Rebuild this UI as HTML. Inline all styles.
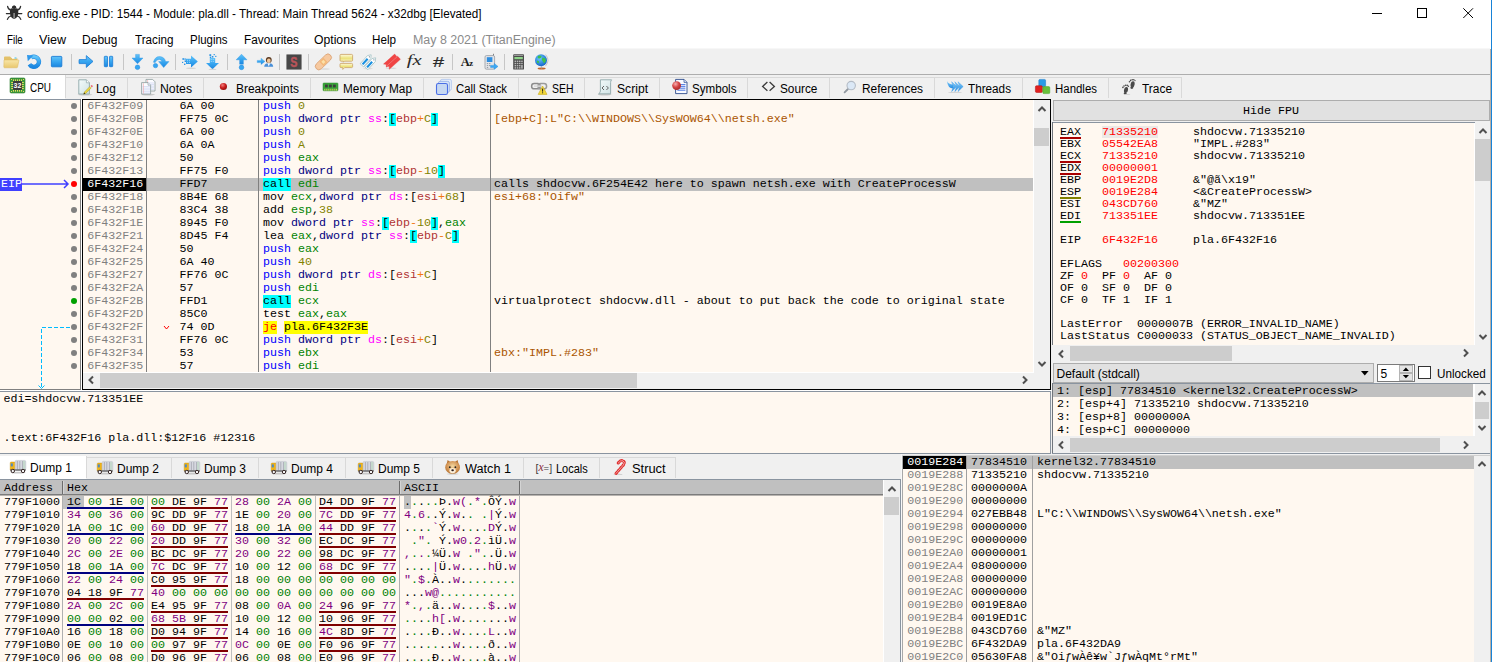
<!DOCTYPE html><html><head><meta charset="utf-8"><title>x32dbg</title><style>
*{margin:0;padding:0;box-sizing:border-box}
html,body{width:1492px;height:662px;overflow:hidden;background:#fff}
body{position:relative;font-family:"Liberation Sans",sans-serif;font-size:12px;color:#000}
.a{position:absolute}
.m{font-family:"Liberation Mono",monospace;font-size:11.665px;white-space:pre;line-height:12px;height:13px}
.r{font-family:"Liberation Mono",monospace;font-size:11.665px;white-space:pre;line-height:12px;height:12px}
.u{position:absolute;white-space:pre;font-size:12px;line-height:14px}
.t{position:absolute;white-space:pre;font-size:12px;line-height:14px;top:81px}
.cream{background:#fff8f0}
.sb{background:#f0f0f0}
.th{background:#cdcdcd}
.gy{color:#808080}
.pp{color:#0000ff}.ms{color:#000080}.sg{color:#ff00ff}.bk{background:#00ffff;color:#000;display:inline-block;height:13px;vertical-align:top}
.br{color:#b03434}.op{color:#f27711}.vl{color:#828200}.rg{color:#008300}
.cl{background:#00ffff;color:#000}.jc{background:#ffff00;color:#ff0000}.ad{background:#ffff00;color:#000}.cl,.jc,.ad{display:inline-block;height:13px;vertical-align:top}
.ac{color:#aa5500}
.rd{color:#ff0000}
.z{color:#008000}.p{color:#800080}
</style></head><body>
<div class="a" style="left:0px;top:0px;width:1492px;height:49px;background:#ffffff;"></div>
<div class="a" style="left:0px;top:49px;width:1491px;height:613px;background:#f0f0f0;"></div>
<div class="a" style="left:0px;top:48px;width:1490px;height:1px;background:#f7f7f7;"></div>
<div class="a" style="left:0px;top:74px;width:1490px;height:1px;background:#adadad;"></div>
<div class="a" style="left:1490px;top:49px;width:1px;height:613px;background:#b8b0a8;"></div>
<div class="a" style="left:1491px;top:0px;width:1px;height:662px;background:#1883d7;"></div>
<svg class="a" style="left:5px;top:4px" width="19" height="17" viewBox="5 4 19 17">
<g stroke="#2e2e2e" stroke-width="1.25" fill="none" stroke-linecap="round">
<path d="M11 10.4 Q8 9.4 7.6 6.4"/><path d="M17.2 10.4 Q20.2 9.4 20.6 6.4"/>
<path d="M10.4 13.6 H6.4"/><path d="M17.8 13.6 H21.8"/>
<path d="M11 16 Q8.2 16.6 7.4 19.4"/><path d="M17.2 16 Q20 16.6 20.8 19.4"/>
</g>
<path d="M11.8 8 Q11.6 5.6 14.1 5.2 Q16.6 5.6 16.4 8 Z" fill="#2e2e2e"/>
<path d="M10.6 8.6 Q14.1 7.2 17.6 8.6 Q19 12 17.8 15.8 Q16.4 18.8 14.1 19 Q11.8 18.8 10.4 15.8 Q9.2 12 10.6 8.6 Z" fill="#2e2e2e"/>
<rect x="13.4" y="13" width="1.4" height="5.4" fill="#9a9a9a"/>
</svg>
<div class="u" style="left:27px;top:7px;transform-origin:0 0;transform:scaleX(0.9758);">config.exe - PID: 1544 - Module: pla.dll - Thread: Main Thread 5624 - x32dbg [Elevated]</div>
<div class="a" style="left:1372px;top:13px;width:10px;height:1px;background:#000;"></div>
<div class="a" style="left:1417px;top:8px;width:10px;height:10px;background:transparent;border:1px solid #000"></div>
<svg class="a" style="left:1463px;top:8px" width="11" height="11" viewBox="0 0 11 11"><path d="M0.3 0.3 L10 10 M10 0.3 L0.3 10" stroke="#000" stroke-width="1" fill="none"/></svg>
<div class="u" style="left:6.5px;top:33px;transform-origin:0 0;transform:scaleX(0.8172);">File</div>
<div class="u" style="left:38.5px;top:33px;transform-origin:0 0;transform:scaleX(1.0468);">View</div>
<div class="u" style="left:82px;top:33px;transform-origin:0 0;transform:scaleX(1.0040);">Debug</div>
<div class="u" style="left:135px;top:33px;transform-origin:0 0;transform:scaleX(0.9731);">Tracing</div>
<div class="u" style="left:190px;top:33px;transform-origin:0 0;transform:scaleX(0.9528);">Plugins</div>
<div class="u" style="left:243.5px;top:33px;transform-origin:0 0;transform:scaleX(0.9818);">Favourites</div>
<div class="u" style="left:314px;top:33px;transform-origin:0 0;transform:scaleX(1.0156);">Options</div>
<div class="u" style="left:372px;top:33px;transform-origin:0 0;transform:scaleX(0.9725);">Help</div>
<div class="u" style="left:412.5px;top:33px;transform-origin:0 0;transform:scaleX(1.0355);color:#8a8a8a">May 8 2021 (TitanEngine)</div>
<div class="a" style="left:71px;top:54px;width:1px;height:16px;background:#c6c6c6;"></div>
<div class="a" style="left:123px;top:54px;width:1px;height:16px;background:#c6c6c6;"></div>
<div class="a" style="left:175px;top:54px;width:1px;height:16px;background:#c6c6c6;"></div>
<div class="a" style="left:227px;top:54px;width:1px;height:16px;background:#c6c6c6;"></div>
<div class="a" style="left:279px;top:54px;width:1px;height:16px;background:#c6c6c6;"></div>
<div class="a" style="left:308px;top:54px;width:1px;height:16px;background:#c6c6c6;"></div>
<div class="a" style="left:452px;top:54px;width:1px;height:16px;background:#c6c6c6;"></div>
<div class="a" style="left:504px;top:54px;width:1px;height:16px;background:#c6c6c6;"></div>
<svg class="a" style="left:0;top:49px" width="560" height="25" viewBox="0 49 560 25">
<defs>
<linearGradient id="gb" x1="0" y1="0" x2="0" y2="1"><stop offset="0" stop-color="#62c4f9"/><stop offset="0.5" stop-color="#38a6f0"/><stop offset="1" stop-color="#1a86e0"/></linearGradient>
<linearGradient id="gb2" x1="0" y1="0" x2="1" y2="1"><stop offset="0" stop-color="#1a8ee6"/><stop offset="0.5" stop-color="#58bdf7"/><stop offset="1" stop-color="#1a8ee6"/></linearGradient>
<linearGradient id="gf" x1="0" y1="0" x2="0" y2="1"><stop offset="0" stop-color="#f8e6a8"/><stop offset="1" stop-color="#e9c76c"/></linearGradient>
<linearGradient id="gy" x1="0" y1="0" x2="0" y2="1"><stop offset="0" stop-color="#fffbe0"/><stop offset="0.5" stop-color="#ece27a"/><stop offset="1" stop-color="#fdf8d0"/></linearGradient>
<radialGradient id="gg" cx="0.4" cy="0.35" r="0.7"><stop offset="0" stop-color="#6cc6ff"/><stop offset="1" stop-color="#0e62c8"/></radialGradient>
</defs>
<!-- 1 folder -->
<path d="M4 57.5 Q4 56.5 5 56.5 H10 L11.5 58 H16.5 Q17.5 58 17.5 59 V60.5 H4 Z" fill="#e3c16a"/>
<rect x="12" y="57.3" width="4.5" height="1.4" fill="#fff"/><rect x="14.5" y="57.3" width="2" height="1.4" fill="#6ac8e8"/>
<path d="M4 60 H18.6 Q19 60 18.9 60.6 L17.6 67 Q17.4 67.8 16.6 67.8 H4.6 Q3.8 67.8 3.8 67 Z" fill="url(#gf)" stroke="#dcb85e" stroke-width="0.5"/>
<!-- 2 restart -->
<path d="M31.2 57.4 A5.1 5.1 0 1 1 29.5 64.4" fill="none" stroke="#1f86de" stroke-width="4.3"/>
<path d="M31.2 57.4 A5.1 5.1 0 1 1 29.5 64.4" fill="none" stroke="url(#gb)" stroke-width="3.3"/>
<path d="M27 54.9 L33.4 55.4 L27.8 61.2 Z" fill="#2f98ea"/>
<!-- 3 stop -->
<rect x="51.4" y="56.4" width="10.4" height="10.4" rx="0.8" fill="url(#gb)" stroke="#1a7cd6" stroke-width="0.9"/>
<!-- 4 run arrow -->
<path d="M79.2 59.6 H86.3 V55.6 L93 61.4 L86.3 67.4 V63.6 H79.2 Q78.8 61.6 79.2 59.6 Z" fill="url(#gb)" stroke="#1a7cd6" stroke-width="0.8"/>
<!-- 5 pause -->
<rect x="104.3" y="56.3" width="3.2" height="10.4" rx="0.6" fill="url(#gb)" stroke="#1a7cd6" stroke-width="0.8"/>
<rect x="109.5" y="56.3" width="3.2" height="10.4" rx="0.6" fill="url(#gb)" stroke="#1a7cd6" stroke-width="0.8"/>
<!-- 6 step into -->
<path d="M135.6 54.4 H139.4 V58 H143 L137.5 63.8 L132 58 H135.6 Z" fill="url(#gb)" stroke="#2a94e6" stroke-width="0.4"/>
<circle cx="137.5" cy="67.3" r="2.3" fill="#35a6f2" stroke="#1c86dc" stroke-width="0.5"/>
<!-- 7 step over -->
<path d="M153.4 62.2 Q155 56.2 160 56.6 Q164.6 57 165.6 61.6 H169 L163.7 67.6 L158.6 61.6 H162 Q161.4 59.6 159.4 59.4 Q156.4 59.4 155.2 62.6 Z" fill="url(#gb)" stroke="#2a94e6" stroke-width="0.4"/>
<circle cx="155.5" cy="65.6" r="2.2" fill="#35a6f2" stroke="#1c86dc" stroke-width="0.5"/>
<!-- 8 trace into (dotted arrow right) -->
<path d="M186 58.8 H191 V55.4 L197.8 61.4 L191 67.4 V64 H186 Z" fill="url(#gb)"/>
<g fill="#2a94e6"><rect x="182.4" y="58.2" width="1.6" height="1.6"/><rect x="184.6" y="60.4" width="1.6" height="1.6"/><rect x="182" y="61.8" width="1.2" height="1.2"/><rect x="184" y="63.6" width="1.4" height="1.4"/><rect x="184.4" y="58.4" width="1.4" height="1.4"/></g>
<g fill="#9ad6fb"><rect x="187" y="59.8" width="1" height="1"/><rect x="189" y="59.8" width="1" height="1"/><rect x="187" y="61.8" width="1" height="1"/><rect x="189" y="61.8" width="1" height="1"/></g>
<ellipse cx="191" cy="68.3" rx="5" ry="0.7" fill="#d4d4d4"/>
<!-- 9 trace over (dotted arrow down) -->
<path d="M209.8 58 H215.2 V63 H219 L212.5 69.2 L206 63 H209.8 Z" fill="url(#gb)"/>
<g fill="#2a94e6"><rect x="209.4" y="54.2" width="1.8" height="1.8"/><rect x="211.8" y="56" width="1.6" height="1.6"/><rect x="213.6" y="54" width="1.2" height="1.2"/><rect x="215.2" y="55.8" width="1.2" height="1.2"/><rect x="209.8" y="56.6" width="1.4" height="1.4"/></g>
<g fill="#9ad6fb"><rect x="210.8" y="59" width="1" height="1"/><rect x="212.8" y="59" width="1" height="1"/><rect x="210.8" y="61" width="1" height="1"/><rect x="212.8" y="61" width="1" height="1"/></g>
<ellipse cx="212.5" cy="69.4" rx="4" ry="0.6" fill="#d4d4d4"/>
<!-- 10 step out -->
<path d="M239.6 64.2 V59.8 H236.2 L241.5 54.2 L247 59.8 H243.4 V64.2 Z" fill="url(#gb)" stroke="#2a94e6" stroke-width="0.4"/>
<circle cx="241.5" cy="67.4" r="2.3" fill="#35a6f2" stroke="#1c86dc" stroke-width="0.5"/>
<!-- 11 run to user code -->
<path d="M257.2 60.4 H261 V58.2 L265 61.4 L261 64.6 V62.6 H257.2 Z" fill="url(#gb)" stroke="#2a94e6" stroke-width="0.3"/>
<path d="M264.2 66.8 Q264.4 63.6 267 63.4 H270.6 Q273 63.6 273.2 66.8 Z" fill="#4a90d8"/>
<path d="M267.6 63.4 L268.8 66.6 L270 63.4 Z" fill="#fff"/>
<circle cx="268.8" cy="59.9" r="2.9" fill="#5a3a22"/>
<ellipse cx="268.8" cy="60.8" rx="1.9" ry="2.3" fill="#f1c79a"/>
<!-- 12 scylla -->
<rect x="286" y="54" width="16" height="16" fill="#fff"/>
<rect x="286.4" y="54.4" width="15.2" height="15.2" fill="#474747"/>
<text x="290.2" y="67.3" font-family="Liberation Sans" font-weight="bold" font-size="15" fill="#b9545a" stroke="#b9545a" stroke-width="0.5" textLength="7.2" lengthAdjust="spacingAndGlyphs">S</text>
<!-- 13 patch band-aid -->
<ellipse cx="325" cy="69" rx="5" ry="0.7" fill="#d8d8d8"/>
<g transform="rotate(-44 323.4 61.9)"><rect x="313.6" y="58.4" width="19.6" height="7" rx="3.5" fill="#f6c9a0" stroke="#d59a6c" stroke-width="0.7"/><rect x="320.6" y="59" width="5.6" height="5.8" fill="#f4b878"/><rect x="322" y="60.4" width="2.8" height="3" fill="#fbe0a8"/></g>
<!-- 14 comments -->
<path d="M340 55.4 Q340 54.4 341 54.4 H351.6 Q352.6 54.4 352.6 55.4 V60.2 Q352.6 61.2 351.6 61.2 H344.4 L343.4 62.2 V61.2 H341 Q340 61.2 340 60.2 Z" fill="url(#gy)" stroke="#c9a060" stroke-width="0.8"/>
<path d="M340 64.4 Q340 63.4 341 63.4 H351.6 Q352.6 63.4 352.6 64.4 V66.6 Q352.6 67.6 351.6 67.6 H344.6 L342.8 69.4 V67.6 H341 Q340 67.6 340 66.6 Z" fill="url(#gy)" stroke="#c9a060" stroke-width="0.8"/>
<!-- 15 labels (blue tags) -->
<ellipse cx="368" cy="68.6" rx="5" ry="0.7" fill="#d8d8d8"/>
<g transform="rotate(-48 366.5 60)"><path d="M359.5 57.8 H370.5 L373.5 60 L370.5 62.2 H359.5 Z" fill="#fff" stroke="#9cbcc0" stroke-width="0.7"/><rect x="360.6" y="58.9" width="7.6" height="2.2" fill="#1a90e0"/><circle cx="370.8" cy="60" r="0.6" fill="#789"/></g>
<g transform="rotate(-48 371 63)"><path d="M364 60.8 H375 L378 63 L375 65.2 H364 Z" fill="#fff" stroke="#9cbcc0" stroke-width="0.7"/><rect x="365.1" y="61.9" width="7.6" height="2.2" fill="#1a90e0"/><circle cx="375.3" cy="63" r="0.6" fill="#789"/></g>
<!-- 16 bookmarks (red) -->
<ellipse cx="391" cy="68.2" rx="5.5" ry="0.7" fill="#d8d8d8"/>
<g transform="rotate(-42 390.6 60.6)"><path d="M383 58.4 H398 V62.6 H383 L384.8 60.5 Z" fill="#f04444" stroke="#e43434" stroke-width="0.3"/></g>
<g transform="rotate(-42 393.6 62.8)"><path d="M386 60.6 H401 V64.8 H386 L387.8 62.7 Z" fill="#f04444" stroke="#e43434" stroke-width="0.3"/><path d="M386.6 60.6 H401" stroke="#f8a0a0" stroke-width="0.5"/></g>
<!-- 17 fx -->
<text x="406.8" y="65" font-family="Liberation Serif" font-style="italic" font-size="15.5" fill="#2a2a2a" textLength="15" lengthAdjust="spacingAndGlyphs">fx</text>
<!-- 18 # -->
<text x="432.8" y="67.2" font-family="Liberation Sans" font-style="italic" font-size="14.4" fill="#2a2a2a" stroke="#2a2a2a" stroke-width="0.2" textLength="11" lengthAdjust="spacingAndGlyphs">#</text>
<!-- 19 A2 -->
<text x="460.8" y="66" font-family="Liberation Serif" font-weight="bold" font-size="12.6" fill="#222">A</text>
<text x="469.2" y="66" font-family="Liberation Serif" font-weight="bold" font-size="8.6" fill="#222">z</text>
<!-- 20 phone + arrow -->
<rect x="493" y="53.8" width="0.9" height="2.4" fill="#777"/>
<rect x="485" y="55.6" width="9.6" height="13.6" rx="1.4" fill="#e4e6ea" stroke="#8a8f98" stroke-width="0.7"/>
<rect x="486.8" y="57.2" width="5.6" height="4.8" fill="#2e8ee0"/>
<g fill="#9aa0a8"><rect x="486.8" y="63" width="1.4" height="1.1"/><rect x="489" y="63" width="1.4" height="1.1"/><rect x="486.8" y="65" width="1.4" height="1.1"/><rect x="489" y="65" width="1.4" height="1.1"/><rect x="486.8" y="67" width="1.4" height="1.1"/></g>
<path d="M490.6 65.4 H494.2 V63.4 L498 66.4 L494.2 69.4 V67.6 H490.6 Z" fill="#3aa8f4" stroke="#1c86dc" stroke-width="0.4"/>
<!-- 21 calculator -->
<rect x="513.2" y="54.2" width="10.8" height="15.4" rx="0.9" fill="#4c4c4c"/>
<rect x="514" y="55" width="9.2" height="1" fill="#9a9a9a"/>
<rect x="514.4" y="57" width="8.4" height="2.2" fill="#8fd48a"/>
<g fill="#b8b8b8"><rect x="514.6" y="60.6" width="1.5" height="1.4"/><rect x="516.8" y="60.6" width="1.5" height="1.4"/><rect x="519" y="60.6" width="1.5" height="1.4"/><rect x="521.2" y="60.6" width="1.5" height="1.4"/>
<rect x="514.6" y="62.8" width="1.5" height="1.4"/><rect x="516.8" y="62.8" width="1.5" height="1.4"/><rect x="519" y="62.8" width="1.5" height="1.4"/><rect x="521.2" y="62.8" width="1.5" height="1.4"/>
<rect x="514.6" y="65" width="1.5" height="1.4"/><rect x="516.8" y="65" width="1.5" height="1.4"/><rect x="519" y="65" width="1.5" height="1.4"/><rect x="521.2" y="65" width="1.5" height="3.6"/>
<rect x="514.6" y="67.2" width="1.5" height="1.4"/><rect x="516.8" y="67.2" width="1.5" height="1.4"/><rect x="519" y="67.2" width="1.5" height="1.4"/></g>
<!-- 22 globe -->
<path d="M545.6 54.6 Q550.6 60.4 545.4 66.2" fill="none" stroke="#c8c8c8" stroke-width="1"/>
<ellipse cx="541.6" cy="68.6" rx="4" ry="1" fill="#c0642a"/>
<rect x="541" y="66.4" width="1.2" height="2" fill="#a8a8a8"/>
<circle cx="541" cy="60.2" r="6" fill="url(#gg)"/>
<path d="M538 56 Q540 55.2 541.6 56 L541 57.8 L539 58.8 L537.6 57.6 Z" fill="#3ec24a"/>
<path d="M542.4 57.4 L545.4 58.4 L546 61 L544 63.4 L543 61.4 L541.8 59.8 Z" fill="#3ec24a"/>
<path d="M537 60.6 L539 61.2 L538.6 63.4 L537 62.6 Z" fill="#3ec24a"/>
</svg>
<div class="a" style="left:0px;top:75px;width:65px;height:24px;background:#ffffff;"></div>
<div class="a" style="left:65px;top:75px;width:1px;height:23px;background:#d9d9d9;"></div>
<div class="a" style="left:65px;top:77px;width:1117px;height:1px;background:#d9d9d9;"></div>
<div class="u" style="left:30px;top:81px;transform-origin:0 0;transform:scaleX(0.8288);">CPU</div>
<div class="a" style="left:127px;top:77px;width:1px;height:21px;background:#d9d9d9;"></div>
<div class="u" style="left:96px;top:82px;transform-origin:0 0;transform:scaleX(0.9890);">Log</div>
<div class="a" style="left:203px;top:77px;width:1px;height:21px;background:#d9d9d9;"></div>
<div class="u" style="left:160px;top:82px;transform-origin:0 0;transform:scaleX(1.0209);">Notes</div>
<div class="a" style="left:310px;top:77px;width:1px;height:21px;background:#d9d9d9;"></div>
<div class="u" style="left:236px;top:82px;transform-origin:0 0;transform:scaleX(0.9942);">Breakpoints</div>
<div class="a" style="left:423px;top:77px;width:1px;height:21px;background:#d9d9d9;"></div>
<div class="u" style="left:343px;top:82px;transform-origin:0 0;transform:scaleX(0.9856);">Memory Map</div>
<div class="a" style="left:518px;top:77px;width:1px;height:21px;background:#d9d9d9;"></div>
<div class="u" style="left:456px;top:82px;transform-origin:0 0;transform:scaleX(0.9441);">Call Stack</div>
<div class="a" style="left:584px;top:77px;width:1px;height:21px;background:#d9d9d9;"></div>
<div class="u" style="left:551.5px;top:82px;transform-origin:0 0;transform:scaleX(0.8713);">SEH</div>
<div class="a" style="left:659px;top:77px;width:1px;height:21px;background:#d9d9d9;"></div>
<div class="u" style="left:617px;top:82px;transform-origin:0 0;transform:scaleX(1.0107);">Script</div>
<div class="a" style="left:747px;top:77px;width:1px;height:21px;background:#d9d9d9;"></div>
<div class="u" style="left:692px;top:82px;transform-origin:0 0;transform:scaleX(0.9671);">Symbols</div>
<div class="a" style="left:829px;top:77px;width:1px;height:21px;background:#d9d9d9;"></div>
<div class="u" style="left:780px;top:82px;transform-origin:0 0;transform:scaleX(0.9837);">Source</div>
<div class="a" style="left:934px;top:77px;width:1px;height:21px;background:#d9d9d9;"></div>
<div class="u" style="left:862px;top:82px;transform-origin:0 0;transform:scaleX(0.9941);">References</div>
<div class="a" style="left:1022px;top:77px;width:1px;height:21px;background:#d9d9d9;"></div>
<div class="u" style="left:968px;top:82px;transform-origin:0 0;transform:scaleX(0.9769);">Threads</div>
<div class="a" style="left:1108px;top:77px;width:1px;height:21px;background:#d9d9d9;"></div>
<div class="u" style="left:1055px;top:82px;transform-origin:0 0;transform:scaleX(0.9540);">Handles</div>
<div class="a" style="left:1181px;top:77px;width:1px;height:21px;background:#d9d9d9;"></div>
<div class="u" style="left:1142px;top:82px;transform-origin:0 0;transform:scaleX(0.9925);">Trace</div>
<svg class="a" style="left:0;top:75px" width="1200" height="24" viewBox="0 75 1200 24">
<defs>
<linearGradient id="pg" x1="0" y1="0" x2="1" y2="1"><stop offset="0" stop-color="#f4fbfb"/><stop offset="1" stop-color="#cfe2e4"/></linearGradient>
<radialGradient id="rb" cx="0.38" cy="0.32" r="0.75"><stop offset="0" stop-color="#f08080"/><stop offset="0.5" stop-color="#cc2020"/><stop offset="1" stop-color="#8a0c0c"/></radialGradient>
<radialGradient id="rb2" cx="0.38" cy="0.32" r="0.75"><stop offset="0" stop-color="#f6b0b0"/><stop offset="0.5" stop-color="#d44444"/><stop offset="1" stop-color="#a02424"/></radialGradient>
<linearGradient id="tb" x1="0" y1="0" x2="0" y2="1"><stop offset="0" stop-color="#8ad0fa"/><stop offset="1" stop-color="#1e88e0"/></linearGradient>
</defs>
<!-- CPU chip -->
<rect x="10" y="78" width="15" height="15" rx="1.2" fill="#3d9a3d" stroke="#2a7a2a" stroke-width="0.6"/>
<g fill="#e8d860"><rect x="13" y="79.4" width="1" height="1.8"/><rect x="15" y="79.4" width="1" height="1.8"/><rect x="17" y="79.4" width="1" height="1.8"/><rect x="19" y="79.4" width="1" height="1.8"/><rect x="21" y="79.4" width="1" height="1.8"/>
<rect x="13" y="89.8" width="1" height="1.8"/><rect x="15" y="89.8" width="1" height="1.8"/><rect x="17" y="89.8" width="1" height="1.8"/><rect x="19" y="89.8" width="1" height="1.8"/><rect x="21" y="89.8" width="1" height="1.8"/>
<rect x="11.2" y="82" width="1.8" height="1"/><rect x="11.2" y="84" width="1.8" height="1"/><rect x="11.2" y="86" width="1.8" height="1"/><rect x="11.2" y="88" width="1.8" height="1"/>
<rect x="22" y="82" width="1.8" height="1"/><rect x="22" y="84" width="1.8" height="1"/><rect x="22" y="86" width="1.8" height="1"/><rect x="22" y="88" width="1.8" height="1"/>
<rect x="11" y="79" width="1" height="1"/><rect x="23" y="79" width="1" height="1"/><rect x="11" y="91" width="1" height="1"/><rect x="23" y="91" width="1" height="1"/></g>
<rect x="13" y="81" width="9" height="9" rx="0.8" fill="#3c3c3c"/>
<text x="13.6" y="88.4" font-family="Liberation Sans" font-weight="bold" font-size="7" fill="#fff" textLength="7.8" lengthAdjust="spacingAndGlyphs">32</text>
<!-- Log: page + pencil -->
<ellipse cx="85" cy="94.8" rx="7.4" ry="0.8" fill="#c8c8c8"/>
<path d="M78.8 79.8 H86.4 L89.4 82.8 V94 H78.8 Z" fill="url(#pg)" stroke="#8fa8aa" stroke-width="0.9"/>
<path d="M86.4 79.8 V82.8 H89.4" fill="#fff" stroke="#8fa8aa" stroke-width="0.7"/>
<path d="M83.6 94.2 L84.4 92 L90 86.4 L91.4 87.8 L85.8 93.4 Z" fill="#ecd83c" stroke="#9a8418" stroke-width="0.4"/>
<path d="M90 86.4 L90.6 85.8 L92 87.2 L91.4 87.8 Z" fill="#e8e8e8"/>
<path d="M90.6 85.8 Q91.6 84.8 92.4 85.6 Q93.2 86.4 92 87.2 Z" fill="#e84050"/>
<path d="M83.6 94.2 L84.2 92.6 L85.2 93.6 Z" fill="#222"/>
<!-- Notes: two pages -->
<ellipse cx="148" cy="94.6" rx="7" ry="0.8" fill="#c8c8c8"/>
<path d="M146 79.4 H152.6 L155 81.8 V91 H146 Z" fill="#fbfcff" stroke="#8a9a9a" stroke-width="0.8"/>
<g stroke="#b8c4ec" stroke-width="0.5"><path d="M147 83 H154 M147 84.6 H154 M147 86.2 H154 M147 87.8 H154 M147 89.4 H154"/></g>
<path d="M147.6 80 V90.6" stroke="#f0a0a0" stroke-width="0.6"/>
<path d="M141.6 82.6 H148 L150.6 85.2 V94 H141.6 Z" fill="#fbfcff" stroke="#8a9a9a" stroke-width="0.8"/>
<path d="M148 82.6 V85.2 H150.6" fill="#eef" stroke="#8a9a9a" stroke-width="0.6"/>
<g stroke="#b8c4ec" stroke-width="0.5"><path d="M142.4 86.6 H150 M142.4 88.2 H150 M142.4 89.8 H150 M142.4 91.4 H150 M142.4 93 H150"/></g>
<path d="M143.4 83.2 V93.6" stroke="#f0a0a0" stroke-width="0.6"/>
<!-- Breakpoints dot -->
<circle cx="223.4" cy="86.5" r="3.6" fill="url(#rb)"/>
<!-- Memory map -->
<rect x="323" y="83" width="15" height="7.8" rx="0.8" fill="#3aa43a" stroke="#2a8a2a" stroke-width="0.5"/>
<g fill="#3c3c3c"><rect x="325" y="84.6" width="2.8" height="2.8"/><rect x="329" y="84.6" width="2.8" height="2.8"/><rect x="333" y="84.6" width="2.8" height="2.8"/></g>
<g fill="#e8d860"><rect x="324.4" y="88.8" width="0.9" height="1.8"/><rect x="326.4" y="88.8" width="0.9" height="1.8"/><rect x="328.4" y="88.8" width="0.9" height="1.8"/><rect x="330.4" y="88.8" width="0.9" height="1.8"/><rect x="332.4" y="88.8" width="0.9" height="1.8"/><rect x="334.4" y="88.8" width="0.9" height="1.8"/><rect x="336.2" y="88.8" width="0.9" height="1.8"/></g>
<!-- Call Stack -->
<rect x="440.4" y="79.4" width="11" height="11" rx="1.6" fill="#e4eefa" stroke="#b4c8ee" stroke-width="0.9"/>
<rect x="438.4" y="81.4" width="11" height="11" rx="1.6" fill="#d8e6f8" stroke="#9ab4ea" stroke-width="0.9"/>
<rect x="436.5" y="83.5" width="11" height="11" rx="1.8" fill="#c6d8f2" stroke="#4a6ee6" stroke-width="1.1"/>
<!-- SEH: chain + warning -->
<rect x="531.6" y="83.6" width="8.6" height="5.2" rx="2.6" fill="none" stroke="#8c8c8c" stroke-width="1.5"/>
<rect x="538" y="83.6" width="8.6" height="5.2" rx="2.6" fill="none" stroke="#9a9a9a" stroke-width="1.5"/>
<rect x="534" y="85.4" width="8" height="1.4" fill="#d8d8d8"/>
<path d="M542.6 86 L547 94.4 H538.2 Z" fill="#f2d838" stroke="#c8a818" stroke-width="0.6" stroke-linejoin="round"/>
<rect x="542.1" y="88.6" width="1" height="3" fill="#222"/><rect x="542.1" y="92.3" width="1" height="1" fill="#222"/>
<!-- Script: scroll -->
<ellipse cx="604.6" cy="94.6" rx="7" ry="0.8" fill="#c8c8c8"/>
<path d="M600.4 79.8 H611.6 Q610.6 81 610.6 82.4 V93.8 H598.6 Q600.4 92.8 600.4 91 Z" fill="url(#pg)" stroke="#8fa8aa" stroke-width="0.9"/>
<path d="M604 86 L602 88 L604 90 M606.4 86 L608.4 88 L606.4 90" fill="none" stroke="#555" stroke-width="0.9"/>
<!-- Symbols: doc + red ball -->
<path d="M675.6 79.4 H684 L687 82.4 V93.6 H675.6 Z" fill="#f8faff" stroke="#2c4c8c" stroke-width="0.9"/>
<path d="M684 79.4 V82.4 H687" fill="#dde6fa" stroke="#2c4c8c" stroke-width="0.7"/>
<g stroke="#3a6ae0" stroke-width="0.9"><path d="M680 84.6 H685.4 M680 86.4 H685.4 M680 88.2 H685.4 M677.4 90.2 H685.4"/></g>
<circle cx="676.6" cy="85.6" r="4.4" fill="url(#rb2)"/>
<!-- Source <> -->
<path d="M767.4 82 L762.6 86.4 L767.4 90.8 M769.6 82 L774.4 86.4 L769.6 90.8" fill="none" stroke="#3c3c3c" stroke-width="1.3"/>
<!-- References: magnifier -->
<path d="M848 89 L844.6 92.4" stroke="#9098a0" stroke-width="1.8" stroke-linecap="round"/>
<circle cx="851.2" cy="85.6" r="4.2" fill="#dbe8f6" stroke="#b4bcc6" stroke-width="1.1"/>
<!-- Threads -->
<ellipse cx="955" cy="92.4" rx="7" ry="0.7" fill="#d4d4d4"/>
<path d="M947 81 Q948.6 84.6 953.4 84.4 L953.4 88.6 Q947.6 88.4 947 81 Z" fill="url(#tb)"/>
<path d="M951.6 81.8 L956.8 86.6 L951.6 91.6 L953.4 86.6 Z" fill="url(#tb)" stroke="#3a9ae8" stroke-width="0.4"/>
<path d="M954.8 81.8 L960 86.6 L954.8 91.6 L956.6 86.6 Z" fill="url(#tb)" stroke="#3a9ae8" stroke-width="0.4"/>
<path d="M958 81.8 L963.2 86.6 L958 91.6 L959.8 86.6 Z" fill="url(#tb)" stroke="#3a9ae8" stroke-width="0.4"/>
<!-- Handles cubes -->
<rect x="1038.8" y="79.4" width="6.8" height="7.4" rx="1.2" fill="#2a9be6" stroke="#1878c8" stroke-width="0.5"/>
<rect x="1035.4" y="85.7" width="7" height="6.8" rx="1.2" fill="#e02020" stroke="#b01010" stroke-width="0.5"/>
<rect x="1042.8" y="86.6" width="7" height="7" rx="1.2" fill="#68c03a" stroke="#48a020" stroke-width="0.5"/>
<!-- Trace footprints -->
<g fill="#4a4a4a">
<ellipse cx="1126" cy="90" rx="2" ry="3.1" transform="rotate(10 1126 90)"/>
<ellipse cx="1125.2" cy="93.4" rx="1.5" ry="1.1"/>
<circle cx="1122.9" cy="87.4" r="0.8"/><circle cx="1124" cy="86" r="0.8"/><circle cx="1125.6" cy="85.3" r="0.8"/><circle cx="1127.2" cy="85.4" r="0.8"/><circle cx="1128.4" cy="86.2" r="0.7"/>
<ellipse cx="1132.6" cy="84.4" rx="2" ry="3.1" transform="rotate(10 1132.6 84.4)"/>
<ellipse cx="1131.8" cy="87.8" rx="1.5" ry="1.1"/>
<circle cx="1129.5" cy="81.8" r="0.8"/><circle cx="1130.6" cy="80.4" r="0.8"/><circle cx="1132.2" cy="79.7" r="0.8"/><circle cx="1133.8" cy="79.8" r="0.8"/><circle cx="1135" cy="80.6" r="0.7"/>
</g>
<ellipse cx="1127" cy="94.5" rx="3.4" ry="0.5" fill="#d0d0d0"/>
</svg>
<div class="a" style="left:0px;top:99px;width:81px;height:1px;background:#8a94a0;"></div>
<div class="a" style="left:0px;top:100px;width:80px;height:289px;background:#fff8f0;"></div>
<div class="a" style="left:80px;top:99px;width:1px;height:291px;background:#808080;"></div>
<div class="a" style="left:0px;top:389px;width:81px;height:1px;background:#808080;"></div>
<div class="a" style="left:81px;top:99px;width:1px;height:291px;background:#ffffff;"></div>
<div class="a" style="left:82px;top:99px;width:969px;height:291px;background:#000000;"></div>
<div class="a" style="left:83px;top:100px;width:950px;height:272px;background:#fff8f0;"></div>
<div class="a" style="left:1033px;top:100px;width:1px;height:273px;background:#ffffff;"></div>
<div class="a" style="left:83px;top:372px;width:951px;height:1px;background:#ffffff;"></div>
<div class="a" style="left:147px;top:178px;width:886px;height:13px;background:#c0c0c0;"></div>
<div class="a" style="left:83px;top:178px;width:63px;height:13px;background:#000000;"></div>
<div class="a" style="left:146px;top:100px;width:1px;height:272px;background:#808080;"></div>
<div class="a" style="left:258px;top:100px;width:1px;height:272px;background:#808080;"></div>
<div class="a" style="left:490px;top:100px;width:1px;height:272px;background:#808080;"></div>
<div class="a" style="left:1034px;top:100px;width:16px;height:273px;background:#f0f0f0;"></div>
<div class="a" style="left:1034px;top:128px;width:15px;height:18px;background:#cdcdcd;"></div>
<div class="a" style="left:83px;top:373px;width:967px;height:16px;background:#f0f0f0;"></div>
<div class="a" style="left:100px;top:373px;width:537px;height:15px;background:#cdcdcd;"></div>
<svg class="a" style="left:1035.5px;top:102.5px" width="12" height="12" viewBox="-6 -6 12 12"><path d="M-3.5 2 L0 -1.5 L3.5 2" stroke="#505050" stroke-width="2" fill="none"/></svg>
<svg class="a" style="left:1035.5px;top:357.5px" width="12" height="12" viewBox="-6 -6 12 12"><path d="M-3.5 -2 L0 1.5 L3.5 -2" stroke="#505050" stroke-width="2" fill="none"/></svg>
<svg class="a" style="left:85px;top:374.0px" width="12" height="12" viewBox="-6 -6 12 12"><path d="M2 -3.5 L-1.5 0 L2 3.5" stroke="#505050" stroke-width="2" fill="none"/></svg>
<svg class="a" style="left:1019px;top:374.0px" width="12" height="12" viewBox="-6 -6 12 12"><path d="M-2 -3.5 L1.5 0 L-2 3.5" stroke="#505050" stroke-width="2" fill="none"/></svg>
<div class="a" style="left:70.8px;top:102.9px;width:6.4px;height:6.4px;border-radius:50%;background:#808080"></div>
<div class="a m" style="left:87.3px;top:100px;color:#808080">6F432F09</div>
<div class="a m" style="left:179.5px;top:100px;">6A 00</div>
<div class="a m" style="left:263px;top:100px;"><span class="pp">push</span> <span class="vl">0</span></div>
<div class="a" style="left:70.8px;top:115.9px;width:6.4px;height:6.4px;border-radius:50%;background:#808080"></div>
<div class="a m" style="left:87.3px;top:113px;color:#808080">6F432F0B</div>
<div class="a m" style="left:179.5px;top:113px;">FF75 0C</div>
<div class="a m" style="left:263px;top:113px;"><span class="pp">push</span> <span class="ms">dword ptr </span><span class="sg">ss</span>:<span class="bk">[</span><span class="br">ebp</span><span class="op">+</span><span class="vl">C</span><span class="bk">]</span></div>
<div class="a m" style="left:494px;top:113px;"><span class="ac">[ebp+C]:L"C:\\WINDOWS\\SysWOW64\\netsh.exe"</span></div>
<div class="a" style="left:70.8px;top:128.9px;width:6.4px;height:6.4px;border-radius:50%;background:#808080"></div>
<div class="a m" style="left:87.3px;top:126px;color:#808080">6F432F0E</div>
<div class="a m" style="left:179.5px;top:126px;">6A 00</div>
<div class="a m" style="left:263px;top:126px;"><span class="pp">push</span> <span class="vl">0</span></div>
<div class="a" style="left:70.8px;top:141.9px;width:6.4px;height:6.4px;border-radius:50%;background:#808080"></div>
<div class="a m" style="left:87.3px;top:139px;color:#808080">6F432F10</div>
<div class="a m" style="left:179.5px;top:139px;">6A 0A</div>
<div class="a m" style="left:263px;top:139px;"><span class="pp">push</span> <span class="vl">A</span></div>
<div class="a" style="left:70.8px;top:154.9px;width:6.4px;height:6.4px;border-radius:50%;background:#808080"></div>
<div class="a m" style="left:87.3px;top:152px;color:#808080">6F432F12</div>
<div class="a m" style="left:179.5px;top:152px;">50</div>
<div class="a m" style="left:263px;top:152px;"><span class="pp">push</span> <span class="rg">eax</span></div>
<div class="a" style="left:70.8px;top:167.9px;width:6.4px;height:6.4px;border-radius:50%;background:#808080"></div>
<div class="a m" style="left:87.3px;top:165px;color:#808080">6F432F13</div>
<div class="a m" style="left:179.5px;top:165px;">FF75 F0</div>
<div class="a m" style="left:263px;top:165px;"><span class="pp">push</span> <span class="ms">dword ptr </span><span class="sg">ss</span>:<span class="bk">[</span><span class="br">ebp</span><span class="op">-</span><span class="vl">10</span><span class="bk">]</span></div>
<div class="a" style="left:70.8px;top:180.9px;width:6.4px;height:6.4px;border-radius:50%;background:#ff0000"></div>
<div class="a m" style="left:87.3px;top:178px;color:#fff">6F432F16</div>
<div class="a m" style="left:179.5px;top:178px;">FFD7</div>
<div class="a m" style="left:263px;top:178px;"><span class="cl">call</span> <span class="rg">edi</span></div>
<div class="a m" style="left:494px;top:178px;">calls shdocvw.6F254E42 here to spawn netsh.exe with CreateProcessW</div>
<div class="a" style="left:70.8px;top:193.9px;width:6.4px;height:6.4px;border-radius:50%;background:#808080"></div>
<div class="a m" style="left:87.3px;top:191px;color:#808080">6F432F18</div>
<div class="a m" style="left:179.5px;top:191px;">8B4E 68</div>
<div class="a m" style="left:263px;top:191px;">mov <span class="rg">ecx</span>,<span class="ms">dword ptr </span><span class="sg">ds</span>:[<span class="br">esi</span><span class="op">+</span><span class="vl">68</span>]</div>
<div class="a m" style="left:494px;top:191px;"><span class="ac">esi+68:"Oifw"</span></div>
<div class="a" style="left:70.8px;top:206.9px;width:6.4px;height:6.4px;border-radius:50%;background:#808080"></div>
<div class="a m" style="left:87.3px;top:204px;color:#808080">6F432F1B</div>
<div class="a m" style="left:179.5px;top:204px;">83C4 38</div>
<div class="a m" style="left:263px;top:204px;">add <span class="rg">esp</span>,<span class="vl">38</span></div>
<div class="a" style="left:70.8px;top:219.9px;width:6.4px;height:6.4px;border-radius:50%;background:#808080"></div>
<div class="a m" style="left:87.3px;top:217px;color:#808080">6F432F1E</div>
<div class="a m" style="left:179.5px;top:217px;">8945 F0</div>
<div class="a m" style="left:263px;top:217px;">mov <span class="ms">dword ptr </span><span class="sg">ss</span>:<span class="bk">[</span><span class="br">ebp</span><span class="op">-</span><span class="vl">10</span><span class="bk">]</span>,<span class="rg">eax</span></div>
<div class="a" style="left:70.8px;top:232.9px;width:6.4px;height:6.4px;border-radius:50%;background:#808080"></div>
<div class="a m" style="left:87.3px;top:230px;color:#808080">6F432F21</div>
<div class="a m" style="left:179.5px;top:230px;">8D45 F4</div>
<div class="a m" style="left:263px;top:230px;">lea <span class="rg">eax</span>,<span class="ms">dword ptr </span><span class="sg">ss</span>:<span class="bk">[</span><span class="br">ebp</span><span class="op">-</span><span class="vl">C</span><span class="bk">]</span></div>
<div class="a" style="left:70.8px;top:245.9px;width:6.4px;height:6.4px;border-radius:50%;background:#808080"></div>
<div class="a m" style="left:87.3px;top:243px;color:#808080">6F432F24</div>
<div class="a m" style="left:179.5px;top:243px;">50</div>
<div class="a m" style="left:263px;top:243px;"><span class="pp">push</span> <span class="rg">eax</span></div>
<div class="a" style="left:70.8px;top:258.9px;width:6.4px;height:6.4px;border-radius:50%;background:#808080"></div>
<div class="a m" style="left:87.3px;top:256px;color:#808080">6F432F25</div>
<div class="a m" style="left:179.5px;top:256px;">6A 40</div>
<div class="a m" style="left:263px;top:256px;"><span class="pp">push</span> <span class="vl">40</span></div>
<div class="a" style="left:70.8px;top:271.9px;width:6.4px;height:6.4px;border-radius:50%;background:#808080"></div>
<div class="a m" style="left:87.3px;top:269px;color:#808080">6F432F27</div>
<div class="a m" style="left:179.5px;top:269px;">FF76 0C</div>
<div class="a m" style="left:263px;top:269px;"><span class="pp">push</span> <span class="ms">dword ptr </span><span class="sg">ds</span>:[<span class="br">esi</span><span class="op">+</span><span class="vl">C</span>]</div>
<div class="a" style="left:70.8px;top:284.9px;width:6.4px;height:6.4px;border-radius:50%;background:#808080"></div>
<div class="a m" style="left:87.3px;top:282px;color:#808080">6F432F2A</div>
<div class="a m" style="left:179.5px;top:282px;">57</div>
<div class="a m" style="left:263px;top:282px;"><span class="pp">push</span> <span class="rg">edi</span></div>
<div class="a" style="left:70.8px;top:297.9px;width:6.4px;height:6.4px;border-radius:50%;background:#00a000"></div>
<div class="a m" style="left:87.3px;top:295px;color:#808080">6F432F2B</div>
<div class="a m" style="left:179.5px;top:295px;">FFD1</div>
<div class="a m" style="left:263px;top:295px;"><span class="cl">call</span> <span class="rg">ecx</span></div>
<div class="a m" style="left:494px;top:295px;">virtualprotect shdocvw.dll - about to put back the code to original state</div>
<div class="a" style="left:70.8px;top:310.9px;width:6.4px;height:6.4px;border-radius:50%;background:#808080"></div>
<div class="a m" style="left:87.3px;top:308px;color:#808080">6F432F2D</div>
<div class="a m" style="left:179.5px;top:308px;">85C0</div>
<div class="a m" style="left:263px;top:308px;">test <span class="rg">eax</span>,<span class="rg">eax</span></div>
<div class="a" style="left:70.8px;top:323.9px;width:6.4px;height:6.4px;border-radius:50%;background:#808080"></div>
<div class="a m" style="left:87.3px;top:321px;color:#808080">6F432F2F</div>
<div class="a m" style="left:179.5px;top:321px;">74 0D</div>
<div class="a m" style="left:263px;top:321px;"><span class="jc">je</span> <span class="ad">pla.6F432F3E</span></div>
<div class="a" style="left:70.8px;top:336.9px;width:6.4px;height:6.4px;border-radius:50%;background:#808080"></div>
<div class="a m" style="left:87.3px;top:334px;color:#808080">6F432F31</div>
<div class="a m" style="left:179.5px;top:334px;">FF76 0C</div>
<div class="a m" style="left:263px;top:334px;"><span class="pp">push</span> <span class="ms">dword ptr </span><span class="sg">ds</span>:[<span class="br">esi</span><span class="op">+</span><span class="vl">C</span>]</div>
<div class="a" style="left:70.8px;top:349.9px;width:6.4px;height:6.4px;border-radius:50%;background:#808080"></div>
<div class="a m" style="left:87.3px;top:347px;color:#808080">6F432F34</div>
<div class="a m" style="left:179.5px;top:347px;">53</div>
<div class="a m" style="left:263px;top:347px;"><span class="pp">push</span> <span class="rg">ebx</span></div>
<div class="a m" style="left:494px;top:347px;"><span class="ac">ebx:"IMPL.#283"</span></div>
<div class="a" style="left:70.8px;top:362.9px;width:6.4px;height:6.4px;border-radius:50%;background:#808080"></div>
<div class="a m" style="left:87.3px;top:360px;color:#808080">6F432F35</div>
<div class="a m" style="left:179.5px;top:360px;">57</div>
<div class="a m" style="left:263px;top:360px;"><span class="pp">push</span> <span class="rg">edi</span></div>
<svg class="a" style="left:163px;top:324px" width="8" height="8" viewBox="0 0 8 8"><path d="M1 2 L3.5 5 L6 2" stroke="#ff0000" stroke-width="1" fill="none"/></svg>
<div class="a" style="left:0px;top:178px;width:22px;height:13px;background:#4040ff;"></div>
<div class="a m" style="left:1px;top:178px;color:#fff">EIP</div>
<svg class="a" style="left:22px;top:178px" width="48" height="13" viewBox="0 0 48 13"><path d="M0 6 H46 M42 2 L46 6 L42 10" stroke="#4040ff" stroke-width="1.5" fill="none"/></svg>
<svg class="a" style="left:36px;top:325px" width="40" height="66" viewBox="0 0 40 66"><path d="M34 2.5 H5.5 V63.5" stroke="#00bbff" stroke-width="1" fill="none" stroke-dasharray="4 2"/><path d="M2.5 60.5 L5.5 63.5 L8.5 60.5" stroke="#00bbff" stroke-width="1" fill="none"/></svg>
<div class="a" style="left:1053px;top:100px;width:437px;height:21px;background:#e1e1e1;border:1px solid #adadad"></div>
<div class="a m" style="left:1243px;top:105px;">Hide FPU</div>
<div class="a" style="left:1052px;top:122px;width:423px;height:1px;background:#8a94a0;"></div>
<div class="a" style="left:1052px;top:122px;width:1px;height:223px;background:#70757c;"></div>
<div class="a" style="left:1053px;top:123px;width:421px;height:222px;background:#fff8f0;"></div>
<div class="a" style="left:1474px;top:123px;width:1px;height:238px;background:#ffffff;"></div>
<div class="a" style="left:1475px;top:123px;width:15px;height:222px;background:#f0f0f0;"></div>
<div class="a" style="left:1475px;top:139px;width:15px;height:42px;background:#cdcdcd;"></div>
<svg class="a" style="left:1476.5px;top:124.5px" width="12" height="12" viewBox="-6 -6 12 12"><path d="M-3.5 2 L0 -1.5 L3.5 2" stroke="#505050" stroke-width="2" fill="none"/></svg>
<svg class="a" style="left:1476.5px;top:330.5px" width="12" height="12" viewBox="-6 -6 12 12"><path d="M-3.5 -2 L0 1.5 L3.5 -2" stroke="#505050" stroke-width="2" fill="none"/></svg>
<div class="a" style="left:1053px;top:345px;width:422px;height:17px;background:#f0f0f0;"></div>
<div class="a" style="left:1070px;top:346px;width:162px;height:15px;background:#cdcdcd;"></div>
<svg class="a" style="left:1055px;top:347.5px" width="12" height="12" viewBox="-6 -6 12 12"><path d="M2 -3.5 L-1.5 0 L2 3.5" stroke="#505050" stroke-width="2" fill="none"/></svg>
<svg class="a" style="left:1460px;top:347.0px" width="12" height="12" viewBox="-6 -6 12 12"><path d="M-2 -3.5 L1.5 0 L-2 3.5" stroke="#505050" stroke-width="2" fill="none"/></svg>
<div class="a" style="left:1475px;top:345px;width:15px;height:16px;background:#f0f0f0;"></div>
<div class="a r" style="left:1060px;top:126px;">EAX</div>
<div class="a" style="left:1060px;top:137px;width:21px;height:2px;background:#aa0000;"></div>
<div class="a r" style="left:1102px;top:126px;color:#ff0000"><span style="background:#ece8e6;display:inline-block;height:12px;vertical-align:top">71335210</span></div>
<div class="a r" style="left:1193px;top:126px;">shdocvw.71335210</div>
<div class="a r" style="left:1060px;top:138px;">EBX</div>
<div class="a r" style="left:1102px;top:138px;color:#ff0000">05542EA8</div>
<div class="a r" style="left:1193px;top:138px;">"IMPL.#283"</div>
<div class="a r" style="left:1060px;top:150px;">ECX</div>
<div class="a" style="left:1060px;top:161px;width:21px;height:2px;background:#aa0000;"></div>
<div class="a r" style="left:1102px;top:150px;color:#ff0000">71335210</div>
<div class="a r" style="left:1193px;top:150px;">shdocvw.71335210</div>
<div class="a r" style="left:1060px;top:162px;">EDX</div>
<div class="a" style="left:1060px;top:173px;width:21px;height:2px;background:#aa0000;"></div>
<div class="a r" style="left:1102px;top:162px;color:#ff0000">00000001</div>
<div class="a r" style="left:1060px;top:174px;">EBP</div>
<div class="a r" style="left:1102px;top:174px;color:#ff0000">0019E2D8</div>
<div class="a r" style="left:1193px;top:174px;">&amp;"@ã\x19"</div>
<div class="a r" style="left:1060px;top:186px;">ESP</div>
<div class="a" style="left:1060px;top:197px;width:21px;height:2px;background:#808000;"></div>
<div class="a r" style="left:1102px;top:186px;color:#ff0000">0019E284</div>
<div class="a r" style="left:1193px;top:186px;">&lt;&amp;CreateProcessW&gt;</div>
<div class="a r" style="left:1060px;top:198px;">ESI</div>
<div class="a r" style="left:1102px;top:198px;color:#ff0000">043CD760</div>
<div class="a r" style="left:1193px;top:198px;">&amp;"MZ"</div>
<div class="a r" style="left:1060px;top:210px;">EDI</div>
<div class="a" style="left:1060px;top:221px;width:21px;height:2px;background:#00a000;"></div>
<div class="a r" style="left:1102px;top:210px;color:#ff0000">713351EE</div>
<div class="a r" style="left:1193px;top:210px;">shdocvw.713351EE</div>
<div class="a r" style="left:1060px;top:234px;">EIP</div>
<div class="a r" style="left:1102px;top:234px;color:#ff0000">6F432F16</div>
<div class="a r" style="left:1193px;top:234px;">pla.6F432F16</div>
<div class="a r" style="left:1060px;top:258px;">EFLAGS   <span class="rd">00200300</span></div>
<div class="a r" style="left:1060px;top:270px;">ZF <span class="rd">0</span>  PF <span class="rd">0</span>  AF 0</div>
<div class="a r" style="left:1060px;top:282px;">OF 0  SF 0  DF 0</div>
<div class="a r" style="left:1060px;top:294px;">CF 0  TF 1  IF 1</div>
<div class="a r" style="left:1060px;top:318px;">LastError  0000007B (ERROR_INVALID_NAME)</div>
<div class="a r" style="left:1060px;top:330px;">LastStatus C0000033 (STATUS_OBJECT_NAME_INVALID)</div>
<div class="a" style="left:1053px;top:363px;width:321px;height:20px;background:#e1e1e1;border:1px solid #adadad"></div>
<div class="u" style="left:1056.5px;top:367px;">Default (stdcall)</div>
<svg class="a" style="left:1360.5px;top:371px" width="8" height="5" viewBox="0 0 8 5"><path d="M0 0 H7.6 L3.8 4.4 Z" fill="#000"/></svg>
<div class="a" style="left:1377px;top:364px;width:38px;height:18px;background:#ffffff;border:1px solid #7a7a7a"></div>
<div class="u" style="left:1380.5px;top:367px;">5</div>
<div class="a" style="left:1399px;top:365px;width:14px;height:8px;background:#e4e4e4;border:1px solid #b4b4b4"></div>
<div class="a" style="left:1399px;top:373px;width:14px;height:8px;background:#e4e4e4;border:1px solid #b4b4b4"></div>
<svg class="a" style="left:1402px;top:367px" width="8" height="12" viewBox="0 0 8 12"><path d="M0.8 4 H7 L3.9 0.6 Z M0.8 8 H7 L3.9 11.2 Z" fill="#000"/></svg>
<div class="a" style="left:1418px;top:366px;width:13px;height:13px;background:#ffffff;border:1px solid #333"></div>
<div class="u" style="left:1436.5px;top:367px;transform-origin:0 0;transform:scaleX(0.9755);">Unlocked</div>
<div class="a" style="left:1052px;top:383px;width:438px;height:1px;background:#8a94a0;"></div>
<div class="a" style="left:1052px;top:383px;width:1px;height:70px;background:#70757c;"></div>
<div class="a" style="left:1053px;top:384px;width:420px;height:52px;background:#fff8f0;"></div>
<div class="a" style="left:1053px;top:384px;width:420px;height:13px;background:#c0c0c0;"></div>
<div class="a" style="left:1473px;top:384px;width:2px;height:68px;background:#ffffff;"></div>
<div class="a m" style="left:1057px;top:385px;">1: [esp] 77834510 &lt;kernel32.CreateProcessW&gt;</div>
<div class="a m" style="left:1057px;top:398px;">2: [esp+4] 71335210 shdocvw.71335210</div>
<div class="a m" style="left:1057px;top:411px;">3: [esp+8] 0000000A</div>
<div class="a m" style="left:1057px;top:424px;">4: [esp+C] 00000000</div>
<div class="a" style="left:1475px;top:384px;width:15px;height:52px;background:#f0f0f0;"></div>
<div class="a" style="left:1475px;top:402px;width:14px;height:17px;background:#cdcdcd;"></div>
<svg class="a" style="left:1475.8px;top:386.5px" width="12" height="12" viewBox="-6 -6 12 12"><path d="M-3.5 2 L0 -1.5 L3.5 2" stroke="#505050" stroke-width="2" fill="none"/></svg>
<svg class="a" style="left:1475.8px;top:421.5px" width="12" height="12" viewBox="-6 -6 12 12"><path d="M-3.5 -2 L0 1.5 L3.5 -2" stroke="#505050" stroke-width="2" fill="none"/></svg>
<div class="a" style="left:1053px;top:436px;width:422px;height:17px;background:#f0f0f0;"></div>
<div class="a" style="left:1070px;top:438px;width:370px;height:14px;background:#cdcdcd;"></div>
<svg class="a" style="left:1055px;top:438.5px" width="12" height="12" viewBox="-6 -6 12 12"><path d="M2 -3.5 L-1.5 0 L2 3.5" stroke="#505050" stroke-width="2" fill="none"/></svg>
<svg class="a" style="left:1459.5px;top:438.5px" width="12" height="12" viewBox="-6 -6 12 12"><path d="M-2 -3.5 L1.5 0 L-2 3.5" stroke="#505050" stroke-width="2" fill="none"/></svg>
<div class="a" style="left:1052px;top:453px;width:438px;height:1px;background:#8a94a0;"></div>
<div class="a" style="left:1475px;top:436px;width:15px;height:16px;background:#f0f0f0;"></div>
<div class="a" style="left:0px;top:391px;width:1051px;height:1px;background:#8a94a0;"></div>
<div class="a" style="left:0px;top:392px;width:1050px;height:61px;background:#fff8f0;"></div>
<div class="a" style="left:1050px;top:391px;width:1px;height:63px;background:#8a94a0;"></div>
<div class="a" style="left:0px;top:453px;width:1051px;height:1px;background:#8a94a0;"></div>
<div class="a" style="left:0px;top:390px;width:1052px;height:1px;background:#ffffff;"></div>
<div class="a m" style="left:3.4px;top:393px;">edi=shdocvw.713351EE</div>
<div class="a m" style="left:3.4px;top:432px;">.text:6F432F16 pla.dll:$12F16 #12316</div>
<div class="a" style="left:0px;top:456px;width:86px;height:23px;background:#ffffff;"></div>
<div class="a" style="left:86px;top:456px;width:1px;height:22px;background:#d9d9d9;"></div>
<div class="a" style="left:86px;top:457px;width:590px;height:1px;background:#d9d9d9;"></div>
<div class="u" style="left:30px;top:461px;transform-origin:0 0;transform:scaleX(0.9996);">Dump 1</div>
<div class="a" style="left:171px;top:457px;width:1px;height:21px;background:#d9d9d9;"></div>
<div class="u" style="left:117px;top:462px;transform-origin:0 0;transform:scaleX(0.9996);">Dump 2</div>
<div class="a" style="left:258px;top:457px;width:1px;height:21px;background:#d9d9d9;"></div>
<div class="u" style="left:204px;top:462px;transform-origin:0 0;transform:scaleX(0.9996);">Dump 3</div>
<div class="a" style="left:345px;top:457px;width:1px;height:21px;background:#d9d9d9;"></div>
<div class="u" style="left:291px;top:462px;transform-origin:0 0;transform:scaleX(0.9996);">Dump 4</div>
<div class="a" style="left:432px;top:457px;width:1px;height:21px;background:#d9d9d9;"></div>
<div class="u" style="left:378px;top:462px;transform-origin:0 0;transform:scaleX(0.9996);">Dump 5</div>
<div class="a" style="left:523px;top:457px;width:1px;height:21px;background:#d9d9d9;"></div>
<div class="u" style="left:465px;top:462px;transform-origin:0 0;transform:scaleX(1.0558);">Watch 1</div>
<div class="a" style="left:599px;top:457px;width:1px;height:21px;background:#d9d9d9;"></div>
<div class="u" style="left:556.2px;top:462px;transform-origin:0 0;transform:scaleX(0.9168);">Locals</div>
<div class="a" style="left:675px;top:457px;width:1px;height:21px;background:#d9d9d9;"></div>
<div class="u" style="left:632.2px;top:462px;transform-origin:0 0;transform:scaleX(1.0721);">Struct</div>
<svg class="a" style="left:0;top:455px" width="700" height="24" viewBox="0 455 700 24"><defs><radialGradient id="dg" cx="0.5" cy="0.4" r="0.7"><stop offset="0" stop-color="#f4d8a0"/><stop offset="0.6" stop-color="#d09050"/><stop offset="1" stop-color="#a86828"/></radialGradient></defs><g transform="translate(10,0)">
<ellipse cx="8" cy="472.6" rx="7.6" ry="0.8" fill="#c8c8c8"/>
<rect x="5" y="460.4" width="10.8" height="9.8" rx="1.4" fill="#d6d8e0" stroke="#b8bcc4" stroke-width="0.5"/>
<path d="M7.4 461 V469.6 M9.8 461 V469.6 M12.6 461 V469.6" stroke="#a8aab4" stroke-width="0.9"/>
<path d="M13 461 H15.2 V469.6 H13 Z" fill="#c4d8cc"/>
<path d="M0.2 463 Q0.2 462 1.2 462 H4.6 V470 H0.2 Z" fill="#f0b418" stroke="#c89010" stroke-width="0.4"/>
<rect x="0.8" y="463.4" width="2" height="3" fill="#4a88c8"/>
<rect x="0.2" y="469.4" width="15.6" height="1.2" fill="#555"/>
<circle cx="2.8" cy="471" r="1.7" fill="#f4f4f4" stroke="#3a2a2a" stroke-width="1"/>
<circle cx="13" cy="471" r="1.7" fill="#f4f4f4" stroke="#3a2a2a" stroke-width="1"/>
</g><g transform="translate(97,1)">
<ellipse cx="8" cy="472.6" rx="7.6" ry="0.8" fill="#c8c8c8"/>
<rect x="5" y="460.4" width="10.8" height="9.8" rx="1.4" fill="#d6d8e0" stroke="#b8bcc4" stroke-width="0.5"/>
<path d="M7.4 461 V469.6 M9.8 461 V469.6 M12.6 461 V469.6" stroke="#a8aab4" stroke-width="0.9"/>
<path d="M13 461 H15.2 V469.6 H13 Z" fill="#c4d8cc"/>
<path d="M0.2 463 Q0.2 462 1.2 462 H4.6 V470 H0.2 Z" fill="#f0b418" stroke="#c89010" stroke-width="0.4"/>
<rect x="0.8" y="463.4" width="2" height="3" fill="#4a88c8"/>
<rect x="0.2" y="469.4" width="15.6" height="1.2" fill="#555"/>
<circle cx="2.8" cy="471" r="1.7" fill="#f4f4f4" stroke="#3a2a2a" stroke-width="1"/>
<circle cx="13" cy="471" r="1.7" fill="#f4f4f4" stroke="#3a2a2a" stroke-width="1"/>
</g><g transform="translate(184,1)">
<ellipse cx="8" cy="472.6" rx="7.6" ry="0.8" fill="#c8c8c8"/>
<rect x="5" y="460.4" width="10.8" height="9.8" rx="1.4" fill="#d6d8e0" stroke="#b8bcc4" stroke-width="0.5"/>
<path d="M7.4 461 V469.6 M9.8 461 V469.6 M12.6 461 V469.6" stroke="#a8aab4" stroke-width="0.9"/>
<path d="M13 461 H15.2 V469.6 H13 Z" fill="#c4d8cc"/>
<path d="M0.2 463 Q0.2 462 1.2 462 H4.6 V470 H0.2 Z" fill="#f0b418" stroke="#c89010" stroke-width="0.4"/>
<rect x="0.8" y="463.4" width="2" height="3" fill="#4a88c8"/>
<rect x="0.2" y="469.4" width="15.6" height="1.2" fill="#555"/>
<circle cx="2.8" cy="471" r="1.7" fill="#f4f4f4" stroke="#3a2a2a" stroke-width="1"/>
<circle cx="13" cy="471" r="1.7" fill="#f4f4f4" stroke="#3a2a2a" stroke-width="1"/>
</g><g transform="translate(271,1)">
<ellipse cx="8" cy="472.6" rx="7.6" ry="0.8" fill="#c8c8c8"/>
<rect x="5" y="460.4" width="10.8" height="9.8" rx="1.4" fill="#d6d8e0" stroke="#b8bcc4" stroke-width="0.5"/>
<path d="M7.4 461 V469.6 M9.8 461 V469.6 M12.6 461 V469.6" stroke="#a8aab4" stroke-width="0.9"/>
<path d="M13 461 H15.2 V469.6 H13 Z" fill="#c4d8cc"/>
<path d="M0.2 463 Q0.2 462 1.2 462 H4.6 V470 H0.2 Z" fill="#f0b418" stroke="#c89010" stroke-width="0.4"/>
<rect x="0.8" y="463.4" width="2" height="3" fill="#4a88c8"/>
<rect x="0.2" y="469.4" width="15.6" height="1.2" fill="#555"/>
<circle cx="2.8" cy="471" r="1.7" fill="#f4f4f4" stroke="#3a2a2a" stroke-width="1"/>
<circle cx="13" cy="471" r="1.7" fill="#f4f4f4" stroke="#3a2a2a" stroke-width="1"/>
</g><g transform="translate(358,1)">
<ellipse cx="8" cy="472.6" rx="7.6" ry="0.8" fill="#c8c8c8"/>
<rect x="5" y="460.4" width="10.8" height="9.8" rx="1.4" fill="#d6d8e0" stroke="#b8bcc4" stroke-width="0.5"/>
<path d="M7.4 461 V469.6 M9.8 461 V469.6 M12.6 461 V469.6" stroke="#a8aab4" stroke-width="0.9"/>
<path d="M13 461 H15.2 V469.6 H13 Z" fill="#c4d8cc"/>
<path d="M0.2 463 Q0.2 462 1.2 462 H4.6 V470 H0.2 Z" fill="#f0b418" stroke="#c89010" stroke-width="0.4"/>
<rect x="0.8" y="463.4" width="2" height="3" fill="#4a88c8"/>
<rect x="0.2" y="469.4" width="15.6" height="1.2" fill="#555"/>
<circle cx="2.8" cy="471" r="1.7" fill="#f4f4f4" stroke="#3a2a2a" stroke-width="1"/>
<circle cx="13" cy="471" r="1.7" fill="#f4f4f4" stroke="#3a2a2a" stroke-width="1"/>
</g><ellipse cx="452.6" cy="474" rx="6" ry="0.7" fill="#d0d0d0"/>
<path d="M446.4 465 L447.6 460 L451 462.4 Z" fill="#b87434"/><path d="M458.8 465 L457.6 460 L454.2 462.4 Z" fill="#b87434"/>
<ellipse cx="452.6" cy="467.4" rx="7.4" ry="6.4" fill="url(#dg)"/>
<ellipse cx="452.6" cy="470.6" rx="3.2" ry="2.6" fill="#fbeed8"/>
<circle cx="449.8" cy="467.2" r="0.9" fill="#222"/><circle cx="455.4" cy="467.2" r="0.9" fill="#222"/>
<ellipse cx="452.6" cy="470.2" rx="1.3" ry="1" fill="#2a1a1a"/>
<text x="535.4" y="472" font-family="Liberation Sans" font-size="10.5" fill="#3c3c3c">[</text>
<text x="538.6" y="471.2" font-family="Liberation Serif" font-style="italic" font-size="11.5" fill="#8a2a3a">x</text>
<text x="543.6" y="471.2" font-family="Liberation Sans" font-size="9.5" fill="#3c3c3c">=</text>
<text x="549.2" y="472" font-family="Liberation Sans" font-size="10.5" fill="#3c3c3c">]</text>
<ellipse cx="618" cy="474.4" rx="4.6" ry="0.7" fill="#d0d0d0"/>
<path d="M616 473.4 L623.4 465 Q625.4 462.2 623 460.8 Q620.6 459.8 618.2 463" fill="none" stroke="#f4f0f0" stroke-width="3" stroke-linecap="round"/>
<path d="M616 473.4 L623.4 465 Q625.4 462.2 623 460.8 Q620.6 459.8 618.2 463" fill="none" stroke="#e03030" stroke-width="3" stroke-linecap="round" stroke-dasharray="1.6 1.8"/>
<path d="M616 473.4 L623.4 465 Q625.4 462.2 623 460.8 Q620.6 459.8 618.2 463" fill="none" stroke="#f8e8e8" stroke-width="1" stroke-linecap="round" opacity="0.6"/>
</svg>
<div class="a" style="left:0px;top:479px;width:900px;height:1px;background:#8a94a0;"></div>
<div class="a" style="left:0px;top:480px;width:883px;height:182px;background:#fff8f0;"></div>
<div class="a" style="left:0px;top:480px;width:883px;height:14px;background:#c0c0c0;"></div>
<div class="a" style="left:0px;top:494px;width:883px;height:1px;background:#7c7c7c;"></div>
<div class="a" style="left:0px;top:495px;width:883px;height:1px;background:#b8b4b0;"></div>
<div class="a" style="left:62px;top:481px;width:1px;height:13px;background:#6c6c6c;"></div>
<div class="a" style="left:63px;top:481px;width:1px;height:13px;background:#d4d4d4;"></div>
<div class="a" style="left:399px;top:481px;width:1px;height:13px;background:#6c6c6c;"></div>
<div class="a" style="left:400px;top:481px;width:1px;height:13px;background:#d4d4d4;"></div>
<div class="a" style="left:519px;top:481px;width:1px;height:13px;background:#6c6c6c;"></div>
<div class="a" style="left:520px;top:481px;width:1px;height:13px;background:#d4d4d4;"></div>
<div class="a m" style="left:4px;top:482px;">Address</div>
<div class="a m" style="left:67px;top:482px;">Hex</div>
<div class="a m" style="left:404px;top:482px;">ASCII</div>
<div class="a" style="left:62px;top:496px;width:1px;height:166px;background:#b0b0b0;"></div>
<div class="a" style="left:399px;top:496px;width:1px;height:166px;background:#b0b0b0;"></div>
<div class="a" style="left:519px;top:496px;width:1px;height:166px;background:#b0b0b0;"></div>
<div class="a" style="left:883px;top:480px;width:17px;height:182px;background:#f0f0f0;"></div>
<div class="a" style="left:883px;top:480px;width:1px;height:182px;background:#ffffff;"></div>
<div class="a" style="left:884px;top:497px;width:15px;height:18px;background:#cdcdcd;"></div>
<svg class="a" style="left:885.5px;top:482.5px" width="12" height="12" viewBox="-6 -6 12 12"><path d="M-3.5 2 L0 -1.5 L3.5 2" stroke="#505050" stroke-width="2" fill="none"/></svg>
<div class="a" style="left:900px;top:479px;width:1px;height:183px;background:#8a94a0;"></div>
<div class="a" style="left:63px;top:496px;width:21px;height:13px;background:#c0c0c0;"></div>
<div class="a" style="left:404px;top:496px;width:7px;height:13px;background:#c0c0c0;"></div>
<div class="a m" style="left:4px;top:496px;">779F1000</div>
<div class="a m" style="left:67px;top:496px;">1C <span class="z">00</span> 1E <span class="z">00</span></div>
<div class="a" style="left:67px;top:507px;width:77px;height:2px;background:#000080;"></div>
<div class="a m" style="left:151px;top:496px;"><span class="z">00</span> DE 9F <span class="p">77</span></div>
<div class="a" style="left:151px;top:507px;width:77px;height:2px;background:#800000;"></div>
<div class="a m" style="left:235px;top:496px;"><span class="p">28</span> <span class="z">00</span> <span class="p">2A</span> <span class="z">00</span></div>
<div class="a m" style="left:319px;top:496px;">D4 DD 9F <span class="p">77</span></div>
<div class="a" style="left:319px;top:507px;width:77px;height:2px;background:#800000;"></div>
<div class="a m" style="left:404px;top:496px;">.<span class="z">.</span>.<span class="z">.</span><span class="z">.</span>Þ.<span class="p">w</span><span class="p">(</span><span class="z">.</span><span class="p">*</span><span class="z">.</span>ÔÝ.<span class="p">w</span></div>
<div class="a m" style="left:4px;top:509px;">779F1010</div>
<div class="a m" style="left:67px;top:509px;"><span class="p">34</span> <span class="z">00</span> <span class="p">36</span> <span class="z">00</span></div>
<div class="a m" style="left:151px;top:509px;">9C DD 9F <span class="p">77</span></div>
<div class="a" style="left:151px;top:520px;width:77px;height:2px;background:#800000;"></div>
<div class="a m" style="left:235px;top:509px;">1E <span class="z">00</span> <span class="p">20</span> <span class="z">00</span></div>
<div class="a m" style="left:319px;top:509px;"><span class="p">7C</span> DD 9F <span class="p">77</span></div>
<div class="a" style="left:319px;top:520px;width:77px;height:2px;background:#800000;"></div>
<div class="a m" style="left:404px;top:509px;"><span class="p">4</span><span class="z">.</span><span class="p">6</span><span class="z">.</span>.Ý.<span class="p">w</span>.<span class="z">.</span><span class="p"> </span><span class="z">.</span><span class="p">|</span>Ý.<span class="p">w</span></div>
<div class="a m" style="left:4px;top:522px;">779F1020</div>
<div class="a m" style="left:67px;top:522px;">1A <span class="z">00</span> 1C <span class="z">00</span></div>
<div class="a" style="left:67px;top:533px;width:77px;height:2px;background:#000080;"></div>
<div class="a m" style="left:151px;top:522px;"><span class="p">60</span> DD 9F <span class="p">77</span></div>
<div class="a" style="left:151px;top:533px;width:77px;height:2px;background:#800000;"></div>
<div class="a m" style="left:235px;top:522px;">18 <span class="z">00</span> 1A <span class="z">00</span></div>
<div class="a" style="left:235px;top:533px;width:77px;height:2px;background:#000080;"></div>
<div class="a m" style="left:319px;top:522px;"><span class="p">44</span> DD 9F <span class="p">77</span></div>
<div class="a" style="left:319px;top:533px;width:77px;height:2px;background:#800000;"></div>
<div class="a m" style="left:404px;top:522px;">.<span class="z">.</span>.<span class="z">.</span><span class="p">`</span>Ý.<span class="p">w</span>.<span class="z">.</span>.<span class="z">.</span><span class="p">D</span>Ý.<span class="p">w</span></div>
<div class="a m" style="left:4px;top:535px;">779F1030</div>
<div class="a m" style="left:67px;top:535px;"><span class="p">20</span> <span class="z">00</span> <span class="p">22</span> <span class="z">00</span></div>
<div class="a m" style="left:151px;top:535px;"><span class="p">20</span> DD 9F <span class="p">77</span></div>
<div class="a" style="left:151px;top:546px;width:77px;height:2px;background:#800000;"></div>
<div class="a m" style="left:235px;top:535px;"><span class="p">30</span> <span class="z">00</span> <span class="p">32</span> <span class="z">00</span></div>
<div class="a m" style="left:319px;top:535px;">EC DC 9F <span class="p">77</span></div>
<div class="a" style="left:319px;top:546px;width:77px;height:2px;background:#800000;"></div>
<div class="a m" style="left:404px;top:535px;"><span class="p"> </span><span class="z">.</span><span class="p">"</span><span class="z">.</span><span class="p"> </span>Ý.<span class="p">w</span><span class="p">0</span><span class="z">.</span><span class="p">2</span><span class="z">.</span>ìÜ.<span class="p">w</span></div>
<div class="a m" style="left:4px;top:548px;">779F1040</div>
<div class="a m" style="left:67px;top:548px;"><span class="p">2C</span> <span class="z">00</span> <span class="p">2E</span> <span class="z">00</span></div>
<div class="a m" style="left:151px;top:548px;">BC DC 9F <span class="p">77</span></div>
<div class="a" style="left:151px;top:559px;width:77px;height:2px;background:#800000;"></div>
<div class="a m" style="left:235px;top:548px;"><span class="p">20</span> <span class="z">00</span> <span class="p">22</span> <span class="z">00</span></div>
<div class="a m" style="left:319px;top:548px;">98 DC 9F <span class="p">77</span></div>
<div class="a" style="left:319px;top:559px;width:77px;height:2px;background:#800000;"></div>
<div class="a m" style="left:404px;top:548px;"><span class="p">,</span><span class="z">.</span><span class="p">.</span><span class="z">.</span>¼Ü.<span class="p">w</span><span class="p"> </span><span class="z">.</span><span class="p">"</span><span class="z">.</span>.Ü.<span class="p">w</span></div>
<div class="a m" style="left:4px;top:561px;">779F1050</div>
<div class="a m" style="left:67px;top:561px;">18 <span class="z">00</span> 1A <span class="z">00</span></div>
<div class="a" style="left:67px;top:572px;width:77px;height:2px;background:#000080;"></div>
<div class="a m" style="left:151px;top:561px;"><span class="p">7C</span> DC 9F <span class="p">77</span></div>
<div class="a" style="left:151px;top:572px;width:77px;height:2px;background:#800000;"></div>
<div class="a m" style="left:235px;top:561px;">10 <span class="z">00</span> 12 <span class="z">00</span></div>
<div class="a m" style="left:319px;top:561px;"><span class="p">68</span> DC 9F <span class="p">77</span></div>
<div class="a" style="left:319px;top:572px;width:77px;height:2px;background:#800000;"></div>
<div class="a m" style="left:404px;top:561px;">.<span class="z">.</span>.<span class="z">.</span><span class="p">|</span>Ü.<span class="p">w</span>.<span class="z">.</span>.<span class="z">.</span><span class="p">h</span>Ü.<span class="p">w</span></div>
<div class="a m" style="left:4px;top:574px;">779F1060</div>
<div class="a m" style="left:67px;top:574px;"><span class="p">22</span> <span class="z">00</span> <span class="p">24</span> <span class="z">00</span></div>
<div class="a m" style="left:151px;top:574px;">C0 95 9F <span class="p">77</span></div>
<div class="a" style="left:151px;top:585px;width:77px;height:2px;background:#800000;"></div>
<div class="a m" style="left:235px;top:574px;">18 <span class="z">00</span> <span class="z">00</span> <span class="z">00</span></div>
<div class="a m" style="left:319px;top:574px;"><span class="z">00</span> <span class="z">00</span> <span class="z">00</span> <span class="z">00</span></div>
<div class="a m" style="left:404px;top:574px;"><span class="p">"</span><span class="z">.</span><span class="p">$</span><span class="z">.</span>À..<span class="p">w</span>.<span class="z">.</span><span class="z">.</span><span class="z">.</span><span class="z">.</span><span class="z">.</span><span class="z">.</span><span class="z">.</span></div>
<div class="a m" style="left:4px;top:587px;">779F1070</div>
<div class="a m" style="left:67px;top:587px;">04 18 9F <span class="p">77</span></div>
<div class="a" style="left:67px;top:598px;width:77px;height:2px;background:#800000;"></div>
<div class="a m" style="left:151px;top:587px;"><span class="p">40</span> <span class="z">00</span> <span class="z">00</span> <span class="z">00</span></div>
<div class="a m" style="left:235px;top:587px;"><span class="z">00</span> <span class="z">00</span> <span class="z">00</span> <span class="z">00</span></div>
<div class="a m" style="left:319px;top:587px;"><span class="z">00</span> <span class="z">00</span> <span class="z">00</span> <span class="z">00</span></div>
<div class="a m" style="left:404px;top:587px;">...<span class="p">w</span><span class="p">@</span><span class="z">.</span><span class="z">.</span><span class="z">.</span><span class="z">.</span><span class="z">.</span><span class="z">.</span><span class="z">.</span><span class="z">.</span><span class="z">.</span><span class="z">.</span><span class="z">.</span></div>
<div class="a m" style="left:4px;top:600px;">779F1080</div>
<div class="a m" style="left:67px;top:600px;"><span class="p">2A</span> <span class="z">00</span> <span class="p">2C</span> <span class="z">00</span></div>
<div class="a m" style="left:151px;top:600px;">E4 95 9F <span class="p">77</span></div>
<div class="a" style="left:151px;top:611px;width:77px;height:2px;background:#800000;"></div>
<div class="a m" style="left:235px;top:600px;">08 <span class="z">00</span> <span class="p">0A</span> <span class="z">00</span></div>
<div class="a m" style="left:319px;top:600px;"><span class="p">24</span> 96 9F <span class="p">77</span></div>
<div class="a" style="left:319px;top:611px;width:77px;height:2px;background:#800000;"></div>
<div class="a m" style="left:404px;top:600px;"><span class="p">*</span><span class="z">.</span><span class="p">,</span><span class="z">.</span>ä..<span class="p">w</span>.<span class="z">.</span>.<span class="z">.</span><span class="p">$</span>..<span class="p">w</span></div>
<div class="a m" style="left:4px;top:613px;">779F1090</div>
<div class="a m" style="left:67px;top:613px;"><span class="z">00</span> <span class="z">00</span> 02 <span class="z">00</span></div>
<div class="a" style="left:67px;top:624px;width:77px;height:2px;background:#000080;"></div>
<div class="a m" style="left:151px;top:613px;"><span class="p">68</span> <span class="p">5B</span> 9F <span class="p">77</span></div>
<div class="a" style="left:151px;top:624px;width:77px;height:2px;background:#800000;"></div>
<div class="a m" style="left:235px;top:613px;">10 <span class="z">00</span> 12 <span class="z">00</span></div>
<div class="a m" style="left:319px;top:613px;">10 96 9F <span class="p">77</span></div>
<div class="a" style="left:319px;top:624px;width:77px;height:2px;background:#800000;"></div>
<div class="a m" style="left:404px;top:613px;"><span class="z">.</span><span class="z">.</span>.<span class="z">.</span><span class="p">h</span><span class="p">[</span>.<span class="p">w</span>.<span class="z">.</span>.<span class="z">.</span>...<span class="p">w</span></div>
<div class="a m" style="left:4px;top:626px;">779F10A0</div>
<div class="a m" style="left:67px;top:626px;">16 <span class="z">00</span> 18 <span class="z">00</span></div>
<div class="a m" style="left:151px;top:626px;">D0 94 9F <span class="p">77</span></div>
<div class="a" style="left:151px;top:637px;width:77px;height:2px;background:#800000;"></div>
<div class="a m" style="left:235px;top:626px;">14 <span class="z">00</span> 16 <span class="z">00</span></div>
<div class="a m" style="left:319px;top:626px;"><span class="p">4C</span> 8D 9F <span class="p">77</span></div>
<div class="a" style="left:319px;top:637px;width:77px;height:2px;background:#800000;"></div>
<div class="a m" style="left:404px;top:626px;">.<span class="z">.</span>.<span class="z">.</span>Ð..<span class="p">w</span>.<span class="z">.</span>.<span class="z">.</span><span class="p">L</span>..<span class="p">w</span></div>
<div class="a m" style="left:4px;top:639px;">779F10B0</div>
<div class="a m" style="left:67px;top:639px;">0E <span class="z">00</span> 10 <span class="z">00</span></div>
<div class="a m" style="left:151px;top:639px;"><span class="z">00</span> 97 9F <span class="p">77</span></div>
<div class="a" style="left:151px;top:650px;width:77px;height:2px;background:#800000;"></div>
<div class="a m" style="left:235px;top:639px;"><span class="p">0C</span> <span class="z">00</span> 0E <span class="z">00</span></div>
<div class="a m" style="left:319px;top:639px;">F0 96 9F <span class="p">77</span></div>
<div class="a" style="left:319px;top:650px;width:77px;height:2px;background:#800000;"></div>
<div class="a m" style="left:404px;top:639px;">.<span class="z">.</span>.<span class="z">.</span><span class="z">.</span>..<span class="p">w</span>.<span class="z">.</span>.<span class="z">.</span>ð..<span class="p">w</span></div>
<div class="a m" style="left:4px;top:652px;">779F10C0</div>
<div class="a m" style="left:67px;top:652px;">06 <span class="z">00</span> 08 <span class="z">00</span></div>
<div class="a m" style="left:151px;top:652px;">D0 96 9F <span class="p">77</span></div>
<div class="a" style="left:151px;top:663px;width:77px;height:2px;background:#800000;"></div>
<div class="a m" style="left:235px;top:652px;">06 <span class="z">00</span> 08 <span class="z">00</span></div>
<div class="a m" style="left:319px;top:652px;">E0 96 9F <span class="p">77</span></div>
<div class="a" style="left:319px;top:663px;width:77px;height:2px;background:#800000;"></div>
<div class="a m" style="left:404px;top:652px;">.<span class="z">.</span>.<span class="z">.</span>Ð..<span class="p">w</span>.<span class="z">.</span>.<span class="z">.</span>à..<span class="p">w</span></div>
<div class="a" style="left:147px;top:496px;width:1px;height:166px;background:#c0c0c0;"></div>
<div class="a" style="left:231px;top:496px;width:1px;height:166px;background:#c0c0c0;"></div>
<div class="a" style="left:315px;top:496px;width:1px;height:166px;background:#c0c0c0;"></div>
<div class="a" style="left:901px;top:454px;width:1px;height:208px;background:#f8f8f8;"></div>
<div class="a" style="left:902px;top:455px;width:1px;height:207px;background:#a8a8a8;"></div>
<div class="a" style="left:902px;top:455px;width:588px;height:1px;background:#d0d0d0;"></div>
<div class="a" style="left:903px;top:456px;width:571px;height:206px;background:#fff8f0;"></div>
<div class="a" style="left:1474px;top:456px;width:16px;height:206px;background:#f0f0f0;"></div>
<svg class="a" style="left:1476px;top:457.5px" width="12" height="12" viewBox="-6 -6 12 12"><path d="M-3.5 2 L0 -1.5 L3.5 2" stroke="#505050" stroke-width="2" fill="none"/></svg>
<div class="a" style="left:967px;top:456px;width:507px;height:13px;background:#c0c0c0;"></div>
<div class="a" style="left:903px;top:456px;width:63px;height:13px;background:#000000;"></div>
<div class="a" style="left:966px;top:456px;width:1px;height:206px;background:#a0a0a0;"></div>
<div class="a" style="left:1032px;top:456px;width:1px;height:206px;background:#a0a0a0;"></div>
<div class="a m" style="left:907.3px;top:456px;color:#fff">0019E284</div>
<div class="a m" style="left:971px;top:456px;">77834510</div>
<div class="a m" style="left:1037px;top:456px;">kernel32.77834510</div>
<div class="a m" style="left:907.3px;top:469px;color:#808080">0019E288</div>
<div class="a m" style="left:971px;top:469px;">71335210</div>
<div class="a m" style="left:1037px;top:469px;">shdocvw.71335210</div>
<div class="a m" style="left:907.3px;top:482px;color:#808080">0019E28C</div>
<div class="a m" style="left:971px;top:482px;">0000000A</div>
<div class="a m" style="left:907.3px;top:495px;color:#808080">0019E290</div>
<div class="a m" style="left:971px;top:495px;">00000000</div>
<div class="a m" style="left:907.3px;top:508px;color:#808080">0019E294</div>
<div class="a m" style="left:971px;top:508px;">027EBB48</div>
<div class="a m" style="left:1037px;top:508px;">L"C:\\WINDOWS\\SysWOW64\\netsh.exe"</div>
<div class="a m" style="left:907.3px;top:521px;color:#808080">0019E298</div>
<div class="a m" style="left:971px;top:521px;">00000000</div>
<div class="a m" style="left:907.3px;top:534px;color:#808080">0019E29C</div>
<div class="a m" style="left:971px;top:534px;">00000000</div>
<div class="a m" style="left:907.3px;top:547px;color:#808080">0019E2A0</div>
<div class="a m" style="left:971px;top:547px;">00000001</div>
<div class="a m" style="left:907.3px;top:560px;color:#808080">0019E2A4</div>
<div class="a m" style="left:971px;top:560px;">08000000</div>
<div class="a m" style="left:907.3px;top:573px;color:#808080">0019E2A8</div>
<div class="a m" style="left:971px;top:573px;">00000000</div>
<div class="a m" style="left:907.3px;top:586px;color:#808080">0019E2AC</div>
<div class="a m" style="left:971px;top:586px;">00000000</div>
<div class="a m" style="left:907.3px;top:599px;color:#808080">0019E2B0</div>
<div class="a m" style="left:971px;top:599px;">0019E8A0</div>
<div class="a m" style="left:907.3px;top:612px;color:#808080">0019E2B4</div>
<div class="a m" style="left:971px;top:612px;">0019ED1C</div>
<div class="a m" style="left:907.3px;top:625px;color:#808080">0019E2B8</div>
<div class="a m" style="left:971px;top:625px;">043CD760</div>
<div class="a m" style="left:1037px;top:625px;">&amp;"MZ"</div>
<div class="a m" style="left:907.3px;top:638px;color:#808080">0019E2BC</div>
<div class="a m" style="left:971px;top:638px;">6F432DA9</div>
<div class="a m" style="left:1037px;top:638px;">pla.6F432DA9</div>
<div class="a m" style="left:907.3px;top:651px;color:#808080">0019E2C0</div>
<div class="a m" style="left:971px;top:651px;">05630FA8</div>
<div class="a m" style="left:1037px;top:651px;">&amp;"OiƒwÀê¥w`JƒwÀqMt°rMt"</div>
</body></html>
